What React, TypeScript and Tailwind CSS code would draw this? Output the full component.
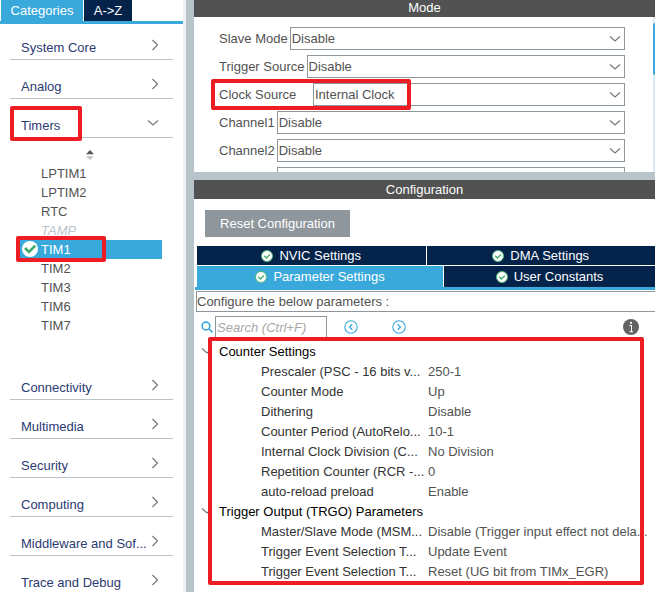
import React from "react";

type Tree = { title: string; rows: [string, string][] };

const peripherals = ["LPTIM1", "LPTIM2", "RTC", "TAMP", "TIM1", "TIM2", "TIM3", "TIM6", "TIM7"];
const lowerCategories = [
  "Connectivity",
  "Multimedia",
  "Security",
  "Computing",
  "Middleware and Sof...",
  "Trace and Debug",
];

const modes = [
  { id: "slave", label: "Slave Mode", value: "Disable" },
  { id: "trigger", label: "Trigger Source", value: "Disable" },
  { id: "clock", label: "Clock Source", value: "Internal Clock" },
  { id: "ch1", label: "Channel1", value: "Disable" },
  { id: "ch2", label: "Channel2", value: "Disable" },
];

const groups: Tree[] = [
  {
    title: "Counter Settings",
    rows: [
      ["Prescaler (PSC - 16 bits v...", "250-1"],
      ["Counter Mode", "Up"],
      ["Dithering", "Disable"],
      ["Counter Period (AutoRelo...", "10-1"],
      ["Internal Clock Division (C...", "No Division"],
      ["Repetition Counter (RCR -...", "0"],
      ["auto-reload preload", "Enable"],
    ],
  },
  {
    title: "Trigger Output (TRGO) Parameters",
    rows: [
      ["Master/Slave Mode (MSM...", "Disable (Trigger input effect not dela..."],
      ["Trigger Event Selection T...", "Update Event"],
      ["Trigger Event Selection T...", "Reset (UG bit from TIMx_EGR)"],
    ],
  },
];

/* Red marker frame laid over the element it points out */
function Marker({ className }: { className: string }) {
  return (
    <span
      aria-hidden="true"
      className={`pointer-events-none absolute z-10 rounded-xs border-4 border-[#ee1c25] ${className}`}
    />
  );
}

function ChevronDown({ className = "" }: { className?: string }) {
  return (
    <svg viewBox="0 0 12 8" fill="none" stroke="#777777" strokeWidth="1.2" className={`h-2 w-3 shrink-0 ${className}`}>
      <path d="M1 1.5 6 6 11 1.5" />
    </svg>
  );
}

function ChevronRight() {
  return (
    <svg viewBox="0 0 8 12" fill="none" stroke="#777777" strokeWidth="1.2" className="h-3 w-2 shrink-0">
      <path d="M1.5 1 6.5 6 1.5 11" />
    </svg>
  );
}

function CheckBadge() {
  return (
    <svg viewBox="0 0 12 12" className="size-3 shrink-0">
      <circle cx="6" cy="6" r="5.5" fill="#ffffff" stroke="#4fb87a" strokeWidth="1" />
      <path d="M3.2 5.8 5.4 8 8.9 4.5" fill="none" stroke="#3fae6b" strokeWidth="1.3" />
    </svg>
  );
}

function Category({ name, open = false }: { name: string; open?: boolean }) {
  return (
    <button
      type="button"
      className="relative flex h-[39px] w-full items-center justify-between border-b border-[#b9c4ca] pr-[14px] pl-[11px] text-left text-[#2b3a72]"
    >
      <span className="pt-[14px] whitespace-nowrap">{name}</span>
      <span className="flex pt-[10px]">{open ? <ChevronDown /> : <ChevronRight />}</span>
      {open && <Marker className="top-[7px] left-0 h-[35px] w-[72px]" />}
    </button>
  );
}

function Sidebar() {
  return (
    <aside className="flex w-[186px] shrink-0 flex-col overflow-hidden border-r-3 border-[#eef1f3]">
      <div role="tablist" className="flex h-6 shrink-0 gap-px border-b-3 border-[#39a9dc] pl-px text-white">
        <button type="button" role="tab" aria-selected="true" className="w-[82px] bg-[#39a9dc]">
          Categories
        </button>
        <button type="button" role="tab" aria-selected="false" className="w-12 bg-[#03234b]">
          A-&gt;Z
        </button>
      </div>
      <nav className="-mt-[3px] pr-[10px] pl-[10px]">
        <Category name="System Core" />
        <Category name="Analog" />
        <Category name="Timers" open />
        <div className="pt-3 pr-[11px] pb-[26px]">
          <button type="button" aria-label="Sort" className="mb-1 ml-[75px] block">
            <svg viewBox="0 0 10 10" className="size-[10px]">
              <path d="M1 4.3 5 0l4 4.3z" fill="#555555" />
              <path d="M1 6.3h8L5 10z" fill="#c4c4c4" />
            </svg>
          </button>
          <ul className="text-[#525252]">
            {peripherals.map((p) => {
              const active = p === "TIM1";
              const look = active
                ? "bg-[#39a9dc] text-white"
                : p === "TAMP"
                  ? "text-[#b9c4ca] italic"
                  : "";
              return (
                <li key={p} className={`relative ml-[10px] flex h-[19px] items-center pl-[21px] ${look}`}>
                  {active && (
                    <>
                      <svg viewBox="0 0 16 16" className="absolute top-px left-[2px] size-4">
                        <circle cx="8" cy="8" r="8" fill="#ffffff" />
                        <path d="M3 7 7 11 13.2 4.6" fill="none" stroke="#3fae6b" strokeWidth="2.6" />
                      </svg>
                      <Marker className="-top-1 -left-1 h-[26px] w-[90px]" />
                    </>
                  )}
                  {p}
                </li>
              );
            })}
          </ul>
        </div>
        {lowerCategories.map((c) => (
          <Category key={c} name={c} />
        ))}
      </nav>
    </aside>
  );
}

function ModePanel() {
  return (
    <section className="flex h-[172px] shrink-0 flex-col overflow-hidden bg-white">
      <h2 className="h-[17px] shrink-0 bg-[#515251] text-center leading-4 text-white">Mode</h2>
      <div className="flex min-h-0 flex-1">
        <div className="flex flex-1 flex-col gap-[5px] pt-[10px] pr-[30px] pl-[25px]">
          {modes.map((m) => (
            <div key={m.id} className="relative -mr-[2px] flex h-[23px] shrink-0 items-center gap-[2px]">
              <label
                htmlFor={m.id}
                className={m.id === "clock" ? "w-[92px] shrink-0" : "shrink-0"}
              >
                {m.label}
              </label>
              <div className="relative h-full min-w-0 flex-1">
                <select
                  id={m.id}
                  defaultValue={m.value}
                  className="block h-full w-full appearance-none border border-[#8f979d] bg-white pl-px"
                >
                  <option>{m.value}</option>
                </select>
                <ChevronDown className="pointer-events-none absolute top-2 right-1" />
              </div>
              {m.id === "clock" && <Marker className="-top-1 -left-2 h-[31px] w-[200px]" />}
            </div>
          ))}
          <select
            aria-label="Channel3"
            className="-mr-[2px] ml-[58px] h-[23px] shrink-0 appearance-none border border-[#8f979d] bg-white"
          />
        </div>
        <div className="w-[2px] bg-[#dbe8f5] pt-[6px]">
          <div className="h-[52px] rounded-l-sm bg-[#39a9dc]" />
        </div>
      </div>
    </section>
  );
}

function Tab({ name, className }: { name: string; className: string }) {
  return (
    <button type="button" role="tab" className={`flex items-center justify-center gap-[6px] ${className}`}>
      <CheckBadge />
      {name}
    </button>
  );
}

function CircleArrow({ d, label }: { d: string; label: string }) {
  return (
    <button type="button" aria-label={label}>
      <svg viewBox="0 0 14 14" fill="none" stroke="#39a9dc" className="size-[14px]">
        <circle cx="7" cy="7" r="6.2" strokeWidth="1.1" />
        <path d={d} strokeWidth="1.3" />
      </svg>
    </button>
  );
}

function ConfigurationPanel() {
  return (
    <section className="flex min-h-0 flex-1 flex-col overflow-hidden bg-white">
      <h2 className="h-[19px] shrink-0 bg-[#515251] text-center leading-[19px] text-white">Configuration</h2>
      <button type="button" className="mt-[11px] ml-[11px] h-[27px] w-[145px] shrink-0 bg-[#8f979d] text-white">
        Reset Configuration
      </button>
      <div role="tablist" className="mt-[9px] ml-px border-b-3 border-[#39a9dc] pl-[2px] text-white">
        <div className="flex h-[19px] gap-px">
          <Tab name="NVIC Settings" className="flex-1 bg-[#03234b]" />
          <Tab name="DMA Settings" className="flex-1 bg-[#03234b]" />
        </div>
        <div className="mt-px flex h-[21px] gap-px">
          <Tab name="Parameter Settings" className="flex-7 bg-[#39a9dc]" />
          <Tab name="User Constants" className="flex-6 bg-[#03234b]" />
        </div>
      </div>
      <p className="mt-px ml-[2px] h-[21px] shrink-0 border border-r-0 border-[#8f979d] leading-[19px]">
        Configure the below parameters :
      </p>
      <div className="mt-1 flex h-[22px] shrink-0 items-center pr-4 pl-[7px]">
        <svg viewBox="0 0 12 12" fill="none" stroke="#39a9dc" strokeWidth="1.6" className="size-3">
          <circle cx="5" cy="5" r="3.9" />
          <path d="M7.9 7.9 11.5 11.5" />
        </svg>
        <input
          type="text"
          aria-label="Search"
          placeholder="Search (Ctrl+F)"
          className="ml-[2px] h-full w-28 border border-[#8f979d] pl-px placeholder:text-[#a8a8a8] placeholder:italic"
        />
        <div className="ml-[17px] flex gap-[34px]">
          <CircleArrow label="Previous" d="M8.3 4.3 5.6 7 8.3 9.7" />
          <CircleArrow label="Next" d="M5.7 4.3 8.4 7 5.7 9.7" />
        </div>
        <svg viewBox="0 0 16 16" className="ml-auto size-4">
          <circle cx="8" cy="8" r="8" fill="#636363" />
          <circle cx="8" cy="3.8" r="1.1" fill="#ffffff" />
          <path d="M6.5 6.5H8.5V12.5M6.5 12.8h3.5" fill="none" stroke="#ffffff" strokeWidth="1.1" />
        </svg>
      </div>
      <div className="relative mt-[3px]">
        <table className="w-full table-fixed border-collapse text-left">
          <colgroup>
            <col className="w-[234px]" />
            <col />
          </colgroup>
          {groups.map((g) => (
            <tbody key={g.title}>
              <tr className="h-5 text-black">
                <th colSpan={2} className="p-0 pl-[7px] font-normal">
                  <span className="flex items-center gap-[6px]">
                    <ChevronDown />
                    {g.title}
                  </span>
                </th>
              </tr>
              {g.rows.map(([name, value], i) => (
                <tr key={i} className="h-5 whitespace-nowrap">
                  <td className="p-0 pl-[67px] text-[#333333]">{name}</td>
                  <td className="p-0">{value}</td>
                </tr>
              ))}
            </tbody>
          ))}
        </table>
        <Marker className="-top-1 right-[11px] -bottom-1 left-[14px]" />
      </div>
    </section>
  );
}

export default function App() {
  return (
    <div className="flex h-screen overflow-hidden bg-white font-['Liberation_Sans',Arial,sans-serif] text-[13px] leading-[19px] text-[#525252]">
      <Sidebar />
      <main className="flex min-w-0 flex-1 flex-col gap-2 border-l-8 border-[#b9c4ca] bg-[#b9c4ca]">
        <ModePanel />
        <ConfigurationPanel />
      </main>
    </div>
  );
}
